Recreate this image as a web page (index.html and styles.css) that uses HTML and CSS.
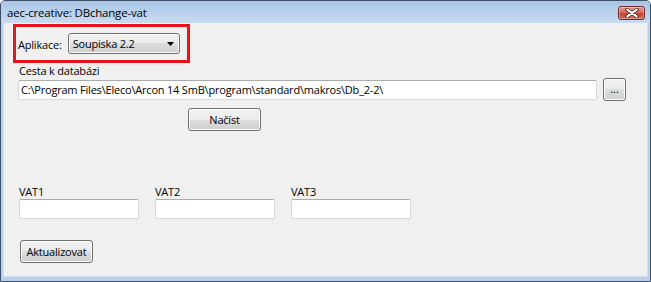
FILE: index.html
```html
<!DOCTYPE html>
<html>
<head>
<meta charset="utf-8">
<link rel="stylesheet" href="styles.css">
</head>
<body>
<div class="window">
  <div class="titlebar">
    <span class="title">aec-creative: DBchange-vat</span>
    <div class="close-btn">
      <svg width="14" height="10" viewBox="0 0 14 10"><path d="M2 1.5 L12 8.5 M12 1.5 L2 8.5" stroke="#5a1a1a" stroke-width="3.6" stroke-linecap="round"/><path d="M2.3 1.7 L11.7 8.3 M11.7 1.7 L2.3 8.3" stroke="#fff" stroke-width="2.2" stroke-linecap="round"/></svg>
    </div>
  </div>
  <div class="client">
    <div class="highlight">
      <span class="lbl">Aplikace:</span>
      <div class="combo">
        <span>Soupiska 2.2</span>
        <svg class="arrow" width="7" height="4" viewBox="0 0 7 4"><path d="M0 0 H7 L3.5 4 Z" fill="#000"/></svg>
      </div>
    </div>
    <div class="path-label">Cesta k databázi</div>
    <div class="path-row">
      <div class="textbox path">C:\Program Files\Eleco\Arcon 14 SmB\program\standard\makros\Db_2-2\</div>
      <div class="btn dots">...</div>
    </div>
    <div class="load-row"><div class="btn load">Načíst</div></div>
    <div class="vat-row">
      <div class="vat"><div class="vat-lbl">VAT1</div><div class="textbox vat-box"></div></div>
      <div class="vat"><div class="vat-lbl">VAT2</div><div class="textbox vat-box"></div></div>
      <div class="vat"><div class="vat-lbl">VAT3</div><div class="textbox vat-box"></div></div>
    </div>
    <div class="btn update">Aktualizovat</div>
  </div>
</div>
</body>
</html>
```
FILE: styles.css
```css
* { box-sizing: border-box; }
html, body { margin: 0; padding: 0; }
body {
  width: 651px;
  height: 282px;
  overflow: hidden;
  font-family: "Open Sans", "Noto Sans", sans-serif;
  font-size: 11px;
  letter-spacing: -0.2px;
  color: #000;
}
.window {
  width: 651px;
  height: 282px;
  display: flex;
  flex-direction: column;
  border: 1px solid #3d4e66;
  border-radius: 5px 5px 0 0;
  background: #b9d1ea;
  padding: 0 2px 4px 2px;
}
.titlebar {
  height: 22px;
  flex: none;
  display: flex;
  align-items: center;
  justify-content: space-between;
  background: linear-gradient(#a9c5e5, #bcd3ed 60%, #c8dbf0);
  margin: 0 -2px;
  padding: 0 5px 0 6px;
  border-radius: 4px 4px 0 0;
}
.title {
  font-size: 11.5px;
  color: #000;
  margin-top: 1px;
}
.close-btn {
  width: 27px;
  height: 14px;
  margin-top: 1px;
  border: 1px solid #6e2a2a;
  border-radius: 3px;
  background: linear-gradient(#e8a093, #d26a5a 45%, #c04532 55%, #d27062);
  display: flex;
  align-items: center;
  justify-content: center;
  box-shadow: inset 0 0 0 1px rgba(255,255,255,0.35);
}
.client {
  flex: 1;
  background: #f0f0f0;
  border: 1px solid #d3e0ee;
  border-top: none;
  padding: 1px 0 0 9px;
  display: flex;
  flex-direction: column;
  align-items: flex-start;
}
.highlight {
  width: 177px;
  height: 39px;
  border: 3px solid #e8141c;
  display: flex;
  align-items: center;
  padding: 0 0 0 2px;
}
.lbl { margin-right: 6px; margin-top: 1px; }
.combo {
  width: 112px;
  height: 21px;
  border: 1px solid #707070;
  border-radius: 3px;
  background: linear-gradient(#f2f2f2, #ebebeb 50%, #dddddd 50%, #cfcfcf);
  box-shadow: inset 0 0 0 1px #fcfcfc;
  display: flex;
  align-items: center;
  justify-content: space-between;
  padding: 0 5px 0 4px;
}
.arrow { margin-top: 1px; }
.path-label {
  margin: 0 0 0 6px;
  line-height: 15px;
}
.path-row {
  display: flex;
  align-items: center;
  gap: 6px;
  margin: 0 0 0 5px;
}
.textbox {
  background: #fff;
  border: 1px solid #d9d9d9;
  border-top-color: #acacac;
  border-radius: 2px;
}
.path {
  width: 579px;
  height: 20px;
  line-height: 18px;
  padding-left: 2px;
  white-space: nowrap;
  overflow: hidden;
}
.btn {
  border: 1px solid #707070;
  border-radius: 3px;
  background: linear-gradient(#f2f2f2, #ebebeb 50%, #dddddd 50%, #cfcfcf);
  box-shadow: inset 0 0 0 1px #fcfcfc;
  display: flex;
  align-items: center;
  justify-content: center;
}
.dots {
  width: 23px;
  height: 23px;
  font-size: 11px;
  letter-spacing: 0;
  padding-bottom: 2px;
  line-height: 1;
}
.load-row {
  margin: 7px 0 0 175px;
}
.load {
  width: 73px;
  height: 23px;
}
.vat-row {
  display: flex;
  gap: 16px;
  margin: 53px 0 0 6px;
}
.vat-lbl {
  line-height: 15px;
  margin-bottom: 0;
}
.vat-box {
  width: 120px;
  height: 20px;
}
.update {
  margin: 21px 0 0 7px;
  width: 73px;
  height: 23px;
}
```
